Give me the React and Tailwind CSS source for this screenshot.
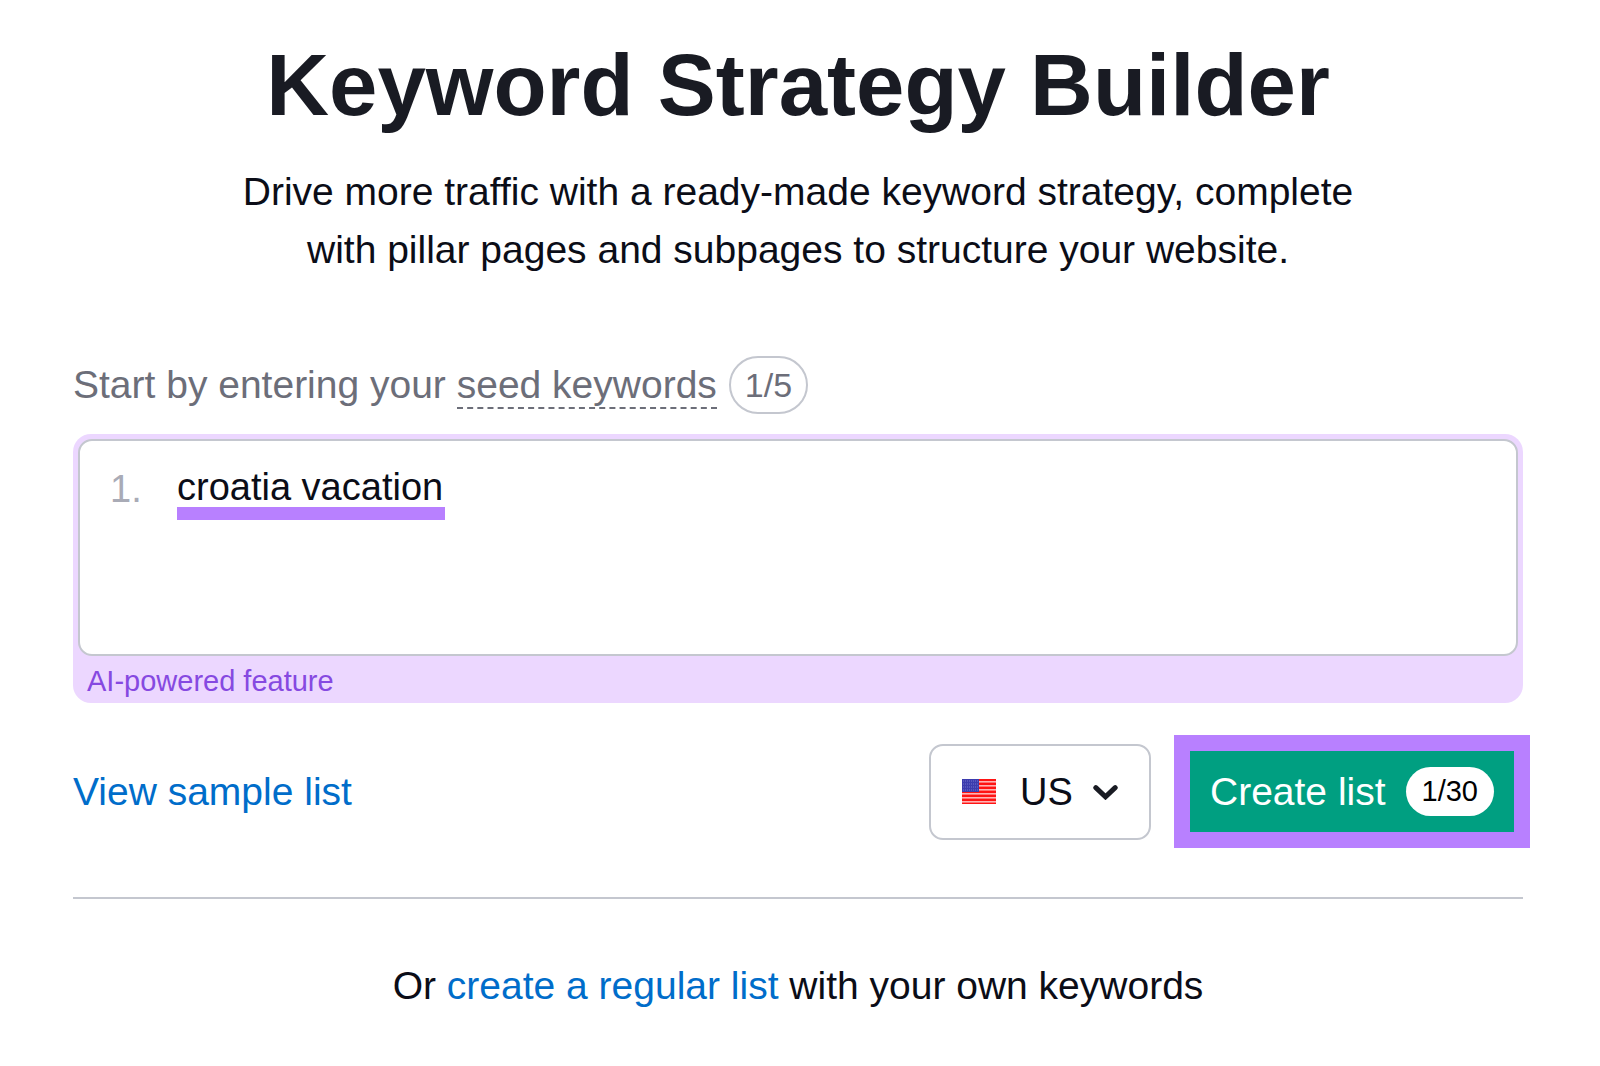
import React, { useState } from "react";

const FlagUS = () => {
  return (
    <svg
      className="w-[34px] h-[25px] shrink-0"
      viewBox="0 0 34 25"
      aria-hidden="true"
    >
      <rect width="34" height="25" fill="#ff1414" />
      {[2, 6, 10, 14, 18, 22].map((y) => (
        <rect key={y} y={y} width="34" height="1.6" fill="#ffb3b3" />
      ))}
      <rect width="17" height="13" fill="#3c3cae" />
      {[2, 5, 8, 11].map((y) => (
        <line
          key={y}
          x1="1"
          x2="16"
          y1={y}
          y2={y}
          stroke="#7474cc"
          strokeWidth="1"
          strokeDasharray="1 1"
        />
      ))}
    </svg>
  );
};

const ChevronDown = () => {
  return (
    <svg
      className="w-[25px] h-4 shrink-0 pointer-events-none"
      viewBox="0 0 25 16"
      fill="none"
      aria-hidden="true"
    >
      <path
        d="M2.8 3.6 12.5 12.8 22.2 3.6"
        stroke="#191b23"
        strokeWidth="5"
        strokeLinecap="round"
        strokeLinejoin="miter"
      />
    </svg>
  );
};

const App = () => {
  const [keyword, setKeyword] = useState("croatia vacation");
  const [country, setCountry] = useState("US");

  return (
    <main className="min-h-screen bg-white pl-[73px] pr-[77px] pt-[35px] pb-12 font-['Liberation_Sans',Arial,sans-serif] text-[39px] leading-[58px] text-[#0b0d17]">
      <header className="text-center">
        <h1 className="text-[87px] leading-[100px] font-bold text-[#191b23]">
          Keyword Strategy Builder
        </h1>
        <p className="mx-auto mt-7 max-w-[1180px]">
          Drive more traffic with a ready-made keyword strategy, complete with
          pillar pages and subpages to structure your website.
        </p>
      </header>

      <form className="mt-[77px]" onSubmit={(e) => e.preventDefault()}>
        <div className="flex items-center gap-3 text-[#6c6e79]">
          <label htmlFor="keyword">
            Start by entering your{" "}
            <span className="inline-block leading-[44px] border-b-2 border-dashed border-[#6c6e79]">
              seed keywords
            </span>
          </label>
          <span className="flex h-[58px] items-center rounded-full border-2 border-[#c4c7cf] px-[14px] text-[34px]">
            1/5
          </span>
        </div>

        <div className="mt-5 rounded-[18px] bg-[#ecd7ff] px-[5px] pt-[5px]">
          <ol className="min-h-[217px] rounded-[14px] border-2 border-[#c4c7cf] bg-white px-[30px] pt-[23px] text-[38px]">
            <li className="flex items-start">
              <span className="w-[67px] leading-[50px] text-[#a9abb6]">1.</span>
              <input
                id="keyword"
                type="text"
                value={keyword}
                onChange={(e) => setKeyword(e.target.value)}
                className="h-14 w-[268px] border-b-[13px] border-[#b880ff] pt-1 leading-[39px] outline-none"
              />
            </li>
          </ol>
          <p className="px-[9px] pt-1 text-[29px] leading-[43px] text-[#8649e1]">
            AI-powered feature
          </p>
        </div>

        <div className="mt-8 flex items-center justify-between">
          <a href="#sample" className="text-[#006dca] hover:underline">
            View sample list
          </a>
          <div className="-mr-[7px] flex items-center gap-[23px]">
            <div className="flex h-24 items-center rounded-[14px] border-2 border-[#c4c7cf] px-[31px]">
              <FlagUS />
              <select
                aria-label="Country"
                value={country}
                onChange={(e) => setCountry(e.target.value)}
                className="ml-6 w-[73px] appearance-none bg-transparent text-[38px] outline-none"
              >
                <option value="US">US</option>
              </select>
              <ChevronDown />
            </div>
            <button
              type="submit"
              className="flex items-center gap-5 border-16 border-[#b880ff] bg-[#009f81] px-5 py-4 leading-[49px] text-white"
            >
              Create list
              <span className="rounded-full bg-white px-4 text-[29px] text-black">
                1/30
              </span>
            </button>
          </div>
        </div>
      </form>

      <hr className="mt-[49px] border-t-2 border-[#c4c7cf]" />

      <p className="mt-[58px] text-center">
        Or{" "}
        <a href="#regular" className="text-[#006dca] hover:underline">
          create a regular list
        </a>{" "}
        with your own keywords
      </p>
    </main>
  );
};

export default App;
